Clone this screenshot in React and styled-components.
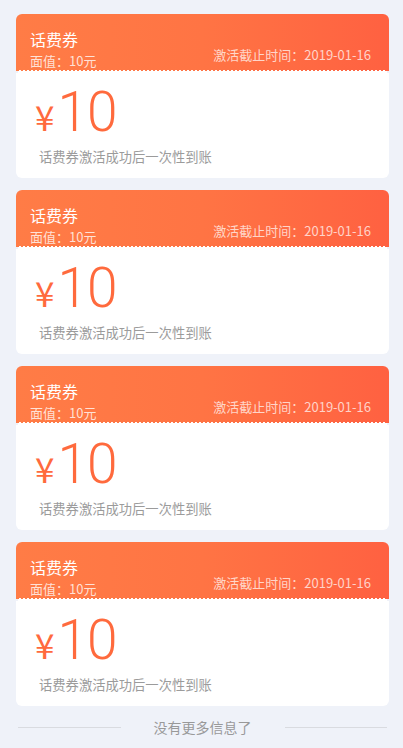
import React from 'react';
import styled, { createGlobalStyle } from 'styled-components';

const GlobalStyle = createGlobalStyle`
  html, body {
    margin: 0;
    padding: 0;
    background: #eff2f9;
    font-family: "Noto Sans CJK SC", "Noto Sans", sans-serif;
  }
`;

const Page = styled.div`
  width: 403px;
  height: 748px;
  padding: 14px 14px 0 16px;
  box-sizing: border-box;
  display: flex;
  flex-direction: column;
  gap: 12px;
  overflow: hidden;
`;

const Card = styled.div`
  display: flex;
  flex-direction: column;
`;

const Header = styled.div`
  position: relative;
  height: 57px;
  border-radius: 6px 6px 0 0;
  background: linear-gradient(90deg, #ff7c46 0%, #ff7444 50%, #ff6141 100%);
  padding: 13px 18px 0 14px;
  box-sizing: border-box;
  display: flex;
  justify-content: space-between;
  align-items: flex-end;
  color: #fff;

  &::after {
    content: '';
    position: absolute;
    left: 2px;
    right: 2px;
    bottom: -2px;
    height: 4px;
    background: radial-gradient(circle at 2px 3px, #fff 1.6px, transparent 2px) repeat-x;
    background-size: 4px 4px;
  }
`;

const HeaderLeft = styled.div`
  display: flex;
  flex-direction: column;
  margin-bottom: 2px;
`;

const Title = styled.div`
  font-size: 16px;
  line-height: 22px;
  color: #fff;
`;

const Face = styled.div`
  font-size: 13px;
  line-height: 16px;
  margin-top: 3px;
  color: rgba(255, 255, 255, 0.78);
`;

const Deadline = styled.div`
  font-size: 13px;
  line-height: 16px;
  color: rgba(255, 255, 255, 0.72);
  margin-bottom: 8px;
`;

const Body = styled.div`
  background: #fff;
  border-radius: 0 0 6px 6px;
  margin-top: 2px;
  height: 105px;
  padding: 14px 0 0 19px;
  box-sizing: border-box;
`;

const Amount = styled.div`
  display: flex;
  align-items: baseline;
  color: #ff6a3d;
  font-family: Roboto, "Noto Sans", sans-serif;
  font-weight: 300;
  height: 50px;
`;

const Yen = styled.span`
  font-size: 35px;
  line-height: 50px;
  margin-right: 3px;
  font-family: "Noto Sans CJK SC", sans-serif;
  font-weight: 400;
`;

const Value = styled.span`
  font-size: 55px;
  line-height: 50px;
  letter-spacing: -1px;
`;

const Desc = styled.div`
  margin-top: 11px;
  padding-left: 4px;
  font-size: 13.3px;
  line-height: 18px;
  color: #9b9b9b;
`;

const Footer = styled.div`
  display: flex;
  align-items: center;
  gap: 33px;
  padding: 0 2px;
`;

const Line = styled.div`
  flex: 1;
  height: 1px;
  background: #d9dbe0;
`;

const FooterText = styled.div`
  font-size: 14px;
  line-height: 18px;
  color: #999;
`;

const coupons = [1, 2, 3, 4].map((id) => ({
  id,
  title: '话费券',
  face: '面值：10元',
  deadline: '激活截止时间：2019-01-16',
  amount: '10',
  desc: '话费券激活成功后一次性到账',
}));

const Coupon = ({ c }) => (
  <Card>
    <Header>
      <HeaderLeft>
        <Title>{c.title}</Title>
        <Face>{c.face}</Face>
      </HeaderLeft>
      <Deadline>{c.deadline}</Deadline>
    </Header>
    <Body>
      <Amount>
        <Yen>¥</Yen>
        <Value>{c.amount}</Value>
      </Amount>
      <Desc>{c.desc}</Desc>
    </Body>
  </Card>
);

export default function App() {
  return (
    <>
      <GlobalStyle />
      <Page>
        {coupons.map((c) => (
          <Coupon key={c.id} c={c} />
        ))}
        <Footer>
          <Line />
          <FooterText>没有更多信息了</FooterText>
          <Line />
        </Footer>
      </Page>
    </>
  );
}
